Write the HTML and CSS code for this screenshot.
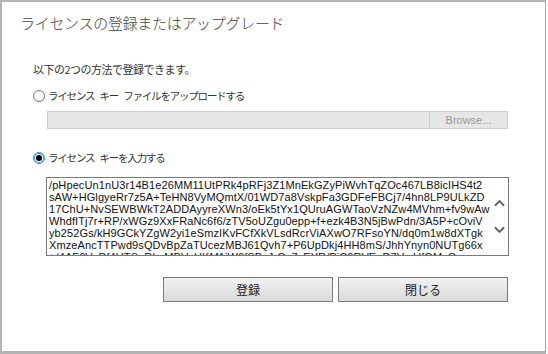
FILE: index.html
```html
<!DOCTYPE html>
<html lang="ja">
<head>
    <meta charset="UTF-8">
    <title>ライセンスの登録またはアップグレード</title>
    <link rel="stylesheet" href="styles.css">
</head>
<body>
    <div class="dialog">
        <h1 class="title">ライセンスの登録またはアップグレード</h1>

        <div class="content">
            <p class="intro">以下の2つの方法で登録できます。</p>

            <!-- Option 1: upload a key file -->
            <label class="option">
                <span class="radio"></span>
                <span class="option-label">ライセンス キー ファイルをアップロードする</span>
            </label>
            <div class="file-input">
                <div class="file-path"></div>
                <div class="browse">Browse...</div>
            </div>

            <!-- Option 2: paste the key -->
            <label class="option option-second">
                <span class="radio checked"></span>
                <span class="option-label">ライセンス キーを入力する</span>
            </label>
            <div class="key-box">
                <div class="key-text">/pHpecUn1nU3r14B1e26MM11UtPRk4pRFj3Z1MnEkGZyPiWvhTqZOc467LB8icIHS4t2
sAW+HGlgyeRr7z5A+TeHN8VyMQmtX/01WD7a8VskpFa3GDFeFBCj7/4hn8LP9ULkZD
17ChU+NvSEWBWkT2ADDAyyreXWn3/oEk5tYx1QUruAGWTaoVzNZw4MVhm+fv9wAw
WhdfITj7r+RP/xWGz9XxFRaNc6f6/zTV5oUZgu0epp+f+ezk4B3N5jBwPdn/3A5P+cOviV
yb252Gs/kH9GCkYZgW2yi1eSmzIKvFCfXkVLsdRcrViAXwO7RFsoYN/dq0m1w8dXTgk
XmzeAncTTPwd9sQDvBpZaTUcezMBJ61Qvh7+P6UpDkj4HH8mS/JhhYnyn0NUTg66x
+/4AF0VsDf4UTSaRhvMBVzHKM1iW6fSBzJrQc7xEYR/PiC0RVEnD7VrcUfQMvQ</div>
                <div class="scroll">
                    <svg viewBox="0 0 12 8" class="arrow"><path d="M1 7 L6 2 L11 7"/></svg>
                    <svg viewBox="0 0 12 8" class="arrow"><path d="M1 1 L6 6 L11 1"/></svg>
                </div>
            </div>
        </div>

        <div class="actions">
            <button class="btn">登録</button>
            <button class="btn">閉じる</button>
        </div>
    </div>
</body>
</html>
```

FILE: styles.css
```css
* {
    margin: 0;
    padding: 0;
    box-sizing: border-box;
}

body {
    background: #fff;
    font-family: "Noto Sans CJK JP", "Liberation Sans", sans-serif;
    color: #333;
}

.dialog {
    width: 546px;
    height: 354px;
    border-top: 2px solid #b4b4b4;
    border-left: 2px solid #b4b4b4;
    border-right: 1px solid #a8a8a8;
    border-bottom: 3px solid #b4b4b4;
    background: #fff;
}

.title {
    font-size: 15px;
    font-weight: 300;
    letter-spacing: -0.3px;
    line-height: 20px;
    color: #444;
    padding: 11px 0 0 18px;
    height: 60px;
}

.content {
    padding-left: 31px;
}

.intro {
    font-size: 11px;
    letter-spacing: -0.5px;
    line-height: 14px;
    color: #333;
}

.option {
    display: flex;
    align-items: center;
    gap: 3px;
    margin-top: 13px;
    height: 14px;
}

.option-second {
    margin-top: 22px;
}

.option-label {
    font-size: 10.5px;
    letter-spacing: -1.2px;
    word-spacing: 4px;
    line-height: 14px;
    color: #333;
}

.radio {
    width: 12px;
    height: 12px;
    border: 1px solid #777;
    border-radius: 50%;
    background: #fff;
    position: relative;
}

.radio.checked {
    border-color: #3a96dd;
    box-shadow: inset 0 0 0 1px #3a96dd;
}

.radio.checked::after {
    content: "";
    position: absolute;
    left: 2px;
    top: 2px;
    width: 6px;
    height: 6px;
    border-radius: 50%;
    background: #000;
}

.file-input {
    display: flex;
    width: 461px;
    height: 18px;
    margin: 8px 0 0 14px;
    border: 1px solid #cfcfcf;
    background: #e6e6e6;
}

.file-path {
    flex: 1;
}

.browse {
    width: 78px;
    border-left: 1px solid #cfcfcf;
    font-family: "Liberation Sans", sans-serif;
    font-size: 11px;
    line-height: 16px;
    color: #9a9a9a;
    text-align: center;
}

.key-box {
    display: flex;
    width: 463px;
    height: 79px;
    margin: 12px 0 0 13px;
    border: 1px solid #7a7a7a;
    overflow: hidden;
}

.key-text {
    flex: 1;
    padding: 1px 0 0 2px;
    font-family: "Liberation Sans", sans-serif;
    font-size: 11px;
    letter-spacing: 0.1px;
    line-height: 12px;
    color: #111;
    white-space: pre;
    overflow: hidden;
}

.scroll {
    width: 17px;
    display: flex;
    flex-direction: column;
    justify-content: space-around;
    align-items: center;
    padding: 12px 0;
}

.arrow {
    width: 11px;
    height: 8px;
    fill: none;
    stroke: #606060;
    stroke-width: 2;
}

.actions {
    display: flex;
    gap: 5px;
    margin: 21px 0 0 161px;
}

.btn {
    width: 170px;
    height: 25px;
    border: 1px solid #7a7a7a;
    background: linear-gradient(to bottom, #f2f2f2, #dadada);
    font-family: "Noto Sans CJK JP", sans-serif;
    font-size: 12px;
    color: #222;
}
```
